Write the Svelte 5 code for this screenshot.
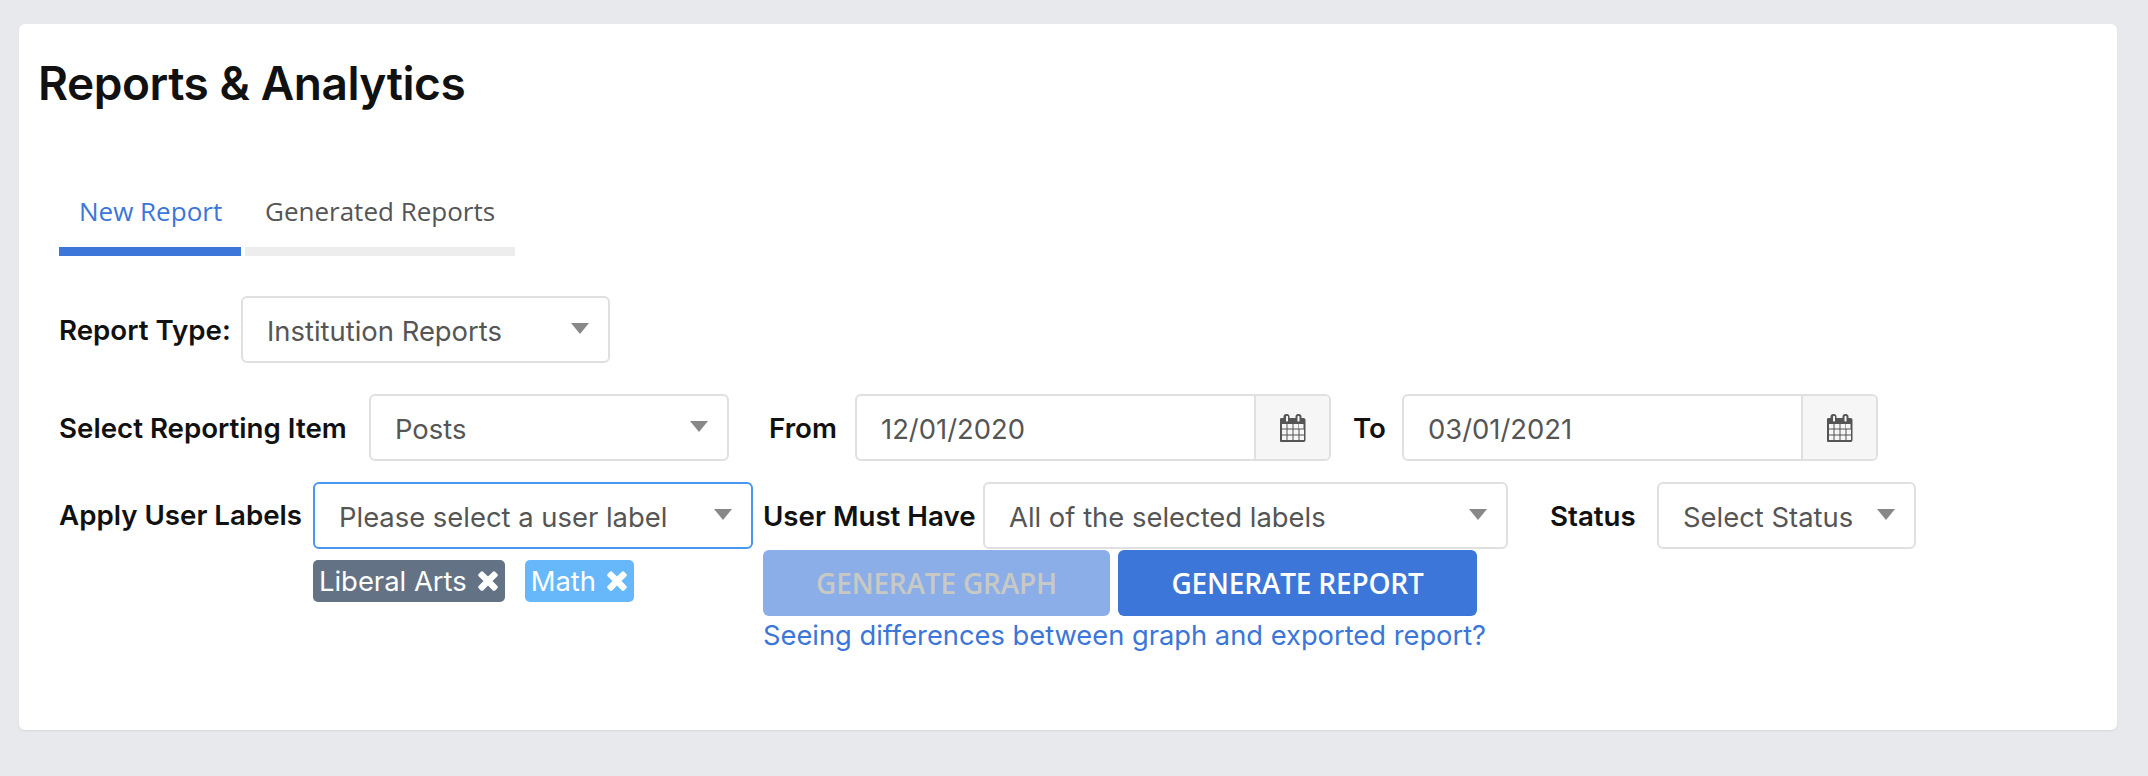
<script lang="ts">
  const calendarPath = 'M128 1664h288v-288h-288v288zm352 0h320v-288h-320v288zm-352-352h288v-320h-288v320zm352 0h320v-320h-320v320zm-352-384h288v-288h-288v288zm736 736h320v-288h-320v288zm-384-736h320v-288h-320v288zm768 736h288v-288h-288v288zm-384-352h320v-320h-320v320zm-352-864v-288q0-13-9.5-22.5t-22.5-9.5h-64q-13 0-22.5 9.5t-9.5 22.5v288q0 13 9.5 22.5t22.5 9.5h64q13 0 22.5-9.5t9.5-22.5zm736 864h288v-320h-288v320zm-384-384h320v-288h-320v288zm352 0h288v-288h-288v288zm32-480v-288q0-13-9.5-22.5t-22.5-9.5h-64q-13 0-22.5 9.5t-9.5 22.5v288q0 13 9.5 22.5t22.5 9.5h64q13 0 22.5-9.5t9.5-22.5zm384-64v1280q0 52-38 90t-90 38h-1408q-52 0-90-38t-38-90v-1280q0-52 38-90t90-38h128v-96q0-66 47-113t113-47h64q66 0 113 47t47 113v96h384v-96q0-66 47-113t113-47h64q66 0 113 47t47 113v96h128q52 0 90 38t38 90z';
  const timesPath = 'M1298 1322q0 40-28 68l-136 136q-28 28-68 28t-68-28l-294-294-294 294q-28 28-68 28t-68-28l-136-136q-28-28-28-68t28-68l294-294-294-294q-28-28-28-68t28-68l136-136q28-28 68-28t68 28l294 294 294-294q28-28 68-28t68 28l136 136q28 28 28 68t-28 68l-294 294 294 294q28 28 28 68z';
  const tags = [
    { name: 'Liberal Arts', cls: 'slate' },
    { name: 'Math', cls: 'sky' }
  ];
</script>

{#snippet select(text: string, cls: string)}
  <div class="select {cls}">
    <span class="value">{text}</span>
    <span class="caret"></span>
  </div>
{/snippet}

{#snippet date(text: string, cls: string)}
  <div class="date {cls}">
    <span class="value">{text}</span>
    <span class="addon">
      <svg viewBox="0 0 1664 1792" width="26" height="28" aria-hidden="true"><path d={calendarPath} /></svg>
    </span>
  </div>
{/snippet}

<div class="card">
  <h1>Reports &amp; Analytics</h1>

  <div class="tabs">
    <div class="tab active">New Report</div>
    <div class="tab">Generated Reports</div>
  </div>

  <div class="row first">
    <span class="label l-type">Report Type:</span>
    {@render select('Institution Reports', 's-type')}
  </div>

  <div class="row second">
    <span class="label l-item">Select Reporting Item</span>
    {@render select('Posts', 's-item')}
    <span class="label l-from">From</span>
    {@render date('12/01/2020', 'd-from')}
    <span class="label l-to">To</span>
    {@render date('03/01/2021', 'd-to')}
  </div>

  <div class="row third">
    <span class="label l-apply">Apply User Labels</span>
    <div class="labels-col">
      {@render select('Please select a user label', 's-labels')}
      <div class="tags">
        {#each tags as tag}
          <span class="tag {tag.cls}">
            {tag.name}
            <svg viewBox="100 350 1208 1208" width="20" height="20" aria-hidden="true"><path d={timesPath} /></svg>
          </span>
        {/each}
      </div>
    </div>
    <div class="right-col">
      <div class="inner-row">
        <span class="label l-must">User Must Have</span>
        {@render select('All of the selected labels', 's-must')}
        <span class="label l-status">Status</span>
        {@render select('Select Status', 's-status')}
      </div>
      <div class="buttons">
        <button type="button" class="btn disabled">Generate Graph</button>
        <button type="button" class="btn primary">Generate Report</button>
      </div>
      <a class="help" href="#top">Seeing differences between graph and exported report?</a>
    </div>
  </div>
</div>

<style>
  :global(body) {
    background: #e8e9ed;
    font-family: Inter, "Liberation Sans", sans-serif;
    min-height: 776px;
  }

  .card {
    box-sizing: border-box;
    width: 2098px;
    height: 706px;
    margin-left: 19px;
    position: relative;
    top: 24px;
    padding: 32px 19px 0;
    background: #fff;
    border-radius: 6px;
    box-shadow: 0 1px 2px rgba(0, 0, 0, 0.08);
  }

  h1 {
    margin: 0;
    font-size: 46px;
    line-height: 54px;
    font-weight: 600;
    letter-spacing: -0.45px;
    color: #111;
  }

  .tabs {
    display: flex;
    gap: 4px;
    margin: 73px 0 0 21px;
    font-family: "Open Sans", sans-serif;
    font-size: 26px;
  }

  .tab {
    height: 73px;
    line-height: 56px;
    padding: 0 20px;
    box-sizing: border-box;
    border-bottom: 9px solid #ededed;
    color: #555;
    white-space: nowrap;
  }

  .tab.active {
    width: 182px;
    color: #3b76d8;
    border-bottom-color: #3b76d8;
  }

  .row {
    display: flex;
    align-items: center;
    margin-left: 21px;
  }

  .row.first { margin-top: 40px; }
  .row.second { margin-top: 31px; }
  .row.third { margin-top: 21px; align-items: flex-start; }

  .label {
    font-size: 27.7px;
    font-weight: 600;
    color: #111;
    white-space: nowrap;
    line-height: 30px;
  }

  .l-type { width: 182px; }
  .l-item { width: 310px; }
  .l-from { width: 86px; margin-left: 40px; }
  .l-to { width: 49px; margin-left: 22px; }
  .l-apply { width: 254px; margin-top: 18px; }
  .l-must { width: 220px; }
  .l-status { width: 107px; margin-left: 42px; }

  .select,
  .date {
    box-sizing: border-box;
    height: 67px;
    display: flex;
    align-items: center;
    background: #fff;
    border: 2px solid #e0e0e0;
    border-radius: 6px;
    font-size: 27.4px;
    color: #555;
  }

  .select {
    justify-content: space-between;
    padding: 0 19px 0 24px;
  }

  .value { position: relative; top: 1px; white-space: nowrap; }

  .caret {
    width: 0;
    height: 0;
    border-left: 9px solid transparent;
    border-right: 9px solid transparent;
    border-top: 11px solid #888;
    margin-top: -2px;
  }

  .s-type { width: 369px; }
  .s-item { width: 360px; }
  .s-labels { width: 440px; border-color: #4a97f0; }
  .s-must { width: 525px; }
  .s-status { width: 259px; }

  .date { overflow: hidden; padding-left: 24px; justify-content: space-between; }
  .d-from { width: 476px; }
  .d-to { width: 476px; }

  .addon {
    width: 75px;
    align-self: stretch;
    display: flex;
    align-items: center;
    justify-content: center;
    background: #f6f6f6;
    border-left: 2px solid #e0e0e0;
    box-sizing: border-box;
  }

  .addon svg { fill: #555; }

  .labels-col { width: 440px; }

  .tags {
    display: flex;
    gap: 20px;
    margin-top: 11px;
  }

  .tag {
    height: 42px;
    display: flex;
    align-items: center;
    gap: 11px;
    padding: 0 7px 0 6px;
    border-radius: 5px;
    color: #fff;
    font-size: 27.4px;
    font-weight: 400;
  }

  .tag svg { fill: #fff; }
  .tag.slate { background: #637285; }
  .tag.sky { background: #66b8fb; }

  .right-col {
    margin-left: 10px;
    display: flex;
    flex-direction: column;
    align-items: flex-start;
  }

  .inner-row {
    display: flex;
    align-items: center;
  }

  .buttons {
    display: flex;
    gap: 8px;
    margin-top: 1px;
  }

  .btn {
    height: 66px;
    border: 0;
    border-radius: 6px;
    font-family: "Open Sans", sans-serif;
    font-size: 28px;
    font-weight: 600;
    letter-spacing: -0.2px;
    text-transform: uppercase;
    padding: 0;
  }

  .btn.disabled { width: 347px; background: #8baee8; color: #c9c9c4; }
  .btn.primary { width: 359px; background: #3b76d8; color: #fff; }

  .help {
    margin-top: 5px;
    font-size: 27.3px;
    line-height: 30px;
    color: #3b76d8;
    text-decoration: none;
  }
</style>
